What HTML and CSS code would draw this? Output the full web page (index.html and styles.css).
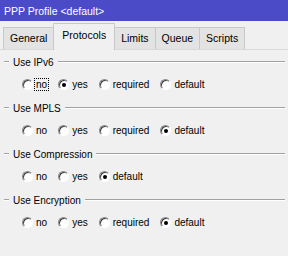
FILE: index.html
```html
<!DOCTYPE html>
<html>
<head>
<meta charset="utf-8">
<link rel="stylesheet" href="styles.css">
</head>
<body>
<div class="window">
  <div class="titlebar">PPP Profile &lt;default&gt;</div>
  <div class="tabs">
    <div class="tab">General</div>
    <div class="tab active">Protocols</div>
    <div class="tab">Limits</div>
    <div class="tab">Queue</div>
    <div class="tab">Scripts</div>
  </div>
  <div class="panel">
    <div class="group">
      <div class="group-head"><span class="legend">Use IPv6</span></div>
      <div class="options">
        <label class="opt"><span class="radio"></span><span class="txt focus">no</span></label>
        <label class="opt"><span class="radio checked"></span><span class="txt">yes</span></label>
        <label class="opt"><span class="radio"></span><span class="txt">required</span></label>
        <label class="opt"><span class="radio"></span><span class="txt">default</span></label>
      </div>
    </div>
    <div class="group">
      <div class="group-head"><span class="legend">Use MPLS</span></div>
      <div class="options">
        <label class="opt"><span class="radio"></span><span class="txt">no</span></label>
        <label class="opt"><span class="radio"></span><span class="txt">yes</span></label>
        <label class="opt"><span class="radio"></span><span class="txt">required</span></label>
        <label class="opt"><span class="radio checked"></span><span class="txt">default</span></label>
      </div>
    </div>
    <div class="group">
      <div class="group-head"><span class="legend">Use Compression</span></div>
      <div class="options">
        <label class="opt"><span class="radio"></span><span class="txt">no</span></label>
        <label class="opt"><span class="radio"></span><span class="txt">yes</span></label>
        <label class="opt"><span class="radio checked"></span><span class="txt">default</span></label>
      </div>
    </div>
    <div class="group">
      <div class="group-head"><span class="legend">Use Encryption</span></div>
      <div class="options">
        <label class="opt"><span class="radio"></span><span class="txt">no</span></label>
        <label class="opt"><span class="radio"></span><span class="txt">yes</span></label>
        <label class="opt"><span class="radio"></span><span class="txt">required</span></label>
        <label class="opt"><span class="radio checked"></span><span class="txt">default</span></label>
      </div>
    </div>
  </div>
</div>
</body>
</html>
```

FILE: styles.css
```css
html, body {
  margin: 0;
  padding: 0;
  background: #f0f0f0;
}
.window {
  width: 288px;
  height: 256px;
  overflow: hidden;
  font-family: "Liberation Sans", Arial, sans-serif;
  font-size: 10.5px;
  color: #000;
  background: #f0f0f0;
}
.titlebar {
  height: 21px;
  background: #4b4bc8;
  color: #fff;
  font-size: 10.5px;
  line-height: 23px;
  padding-left: 4px;
}
.tabs {
  display: flex;
  align-items: flex-end;
  height: 28px;
  padding-left: 3px;
  border-bottom: 1px solid #d9d9d9;
}
.tab {
  height: 21px;
  line-height: 21px;
  padding: 0 6px;
  background: #e3e3e3;
  border: 1px solid #c8c8c8;
  border-bottom: none;
  margin-right: -1px;
}
.tab.active {
  height: 26px;
  line-height: 22px;
  background: #f0f0f0;
  margin-bottom: -1px;
  position: relative;
  z-index: 1;
  padding: 0 8px;
}
.panel {
  padding: 4px 3px 0 4px;
  font-size: 10px;
}
.group {
  margin-bottom: 2px;
}
.group-head {
  display: flex;
  align-items: center;
  height: 16px;
}
.group-head::before,
.group-head::after {
  content: "";
  border-top: 1px solid #a0a0a0;
  border-bottom: 1px solid #fff;
  height: 0;
}
.group-head::before {
  width: 5px;
}
.group-head::after {
  flex: 1;
}
.legend {
  padding: 0 4px;
}
.options {
  display: flex;
  align-items: center;
  height: 28px;
  padding-left: 18px;
  gap: 10px;
}
.opt {
  display: flex;
  align-items: center;
  gap: 2px;
}
.radio {
  width: 9px;
  height: 9px;
  border-radius: 50%;
  background: #fff;
  border: 1px solid;
  border-color: #8a8a8a #fff #fff #8a8a8a;
  box-shadow: inset 1px 1px 0 #404040;
  position: relative;
}
.radio.checked::after {
  content: "";
  position: absolute;
  left: 3px;
  top: 3px;
  width: 4px;
  height: 4px;
  border-radius: 50%;
  background: #000;
}
.txt {
  padding: 0 1px;
  line-height: 11px;
}
.txt.focus {
  outline: 1px dotted #000;
}
```
